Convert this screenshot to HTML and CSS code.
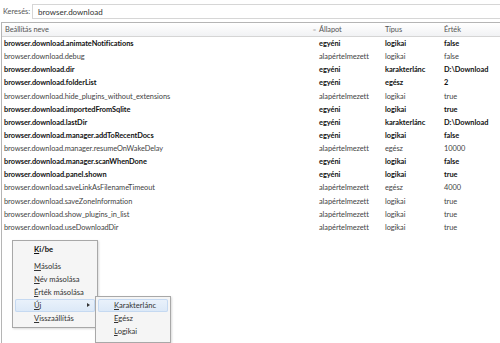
FILE: index.html
```html
<!DOCTYPE html>
<html lang="hu">
<head>
<meta charset="utf-8">
<link rel="stylesheet" href="styles.css">
</head>
<body>
<div class="search">
  <span class="search-label">Keresés:</span>
  <div class="search-input">browser.download</div>
</div>
<div class="list">
  <div class="row head">
    <div class="cell">Beállítás neve</div>
    <div class="cell sorted"><span class="sort">=</span>Állapot</div>
    <div class="cell">Típus</div>
    <div class="cell">Érték</div>
  </div>
  <div class="row b"><div class="cell">browser.download.animateNotifications</div><div class="cell">egyéni</div><div class="cell">logikai</div><div class="cell">false</div></div>
  <div class="row"><div class="cell">browser.download.debug</div><div class="cell">alapértelmezett</div><div class="cell">logikai</div><div class="cell">false</div></div>
  <div class="row b"><div class="cell">browser.download.dir</div><div class="cell">egyéni</div><div class="cell">karakterlánc</div><div class="cell">D:\Download</div></div>
  <div class="row b"><div class="cell">browser.download.folderList</div><div class="cell">egyéni</div><div class="cell">egész</div><div class="cell">2</div></div>
  <div class="row"><div class="cell">browser.download.hide_plugins_without_extensions</div><div class="cell">alapértelmezett</div><div class="cell">logikai</div><div class="cell">true</div></div>
  <div class="row b"><div class="cell">browser.download.importedFromSqlite</div><div class="cell">egyéni</div><div class="cell">logikai</div><div class="cell">true</div></div>
  <div class="row b"><div class="cell">browser.download.lastDir</div><div class="cell">egyéni</div><div class="cell">karakterlánc</div><div class="cell">D:\Download</div></div>
  <div class="row b"><div class="cell">browser.download.manager.addToRecentDocs</div><div class="cell">egyéni</div><div class="cell">logikai</div><div class="cell">false</div></div>
  <div class="row"><div class="cell">browser.download.manager.resumeOnWakeDelay</div><div class="cell">alapértelmezett</div><div class="cell">egész</div><div class="cell">10000</div></div>
  <div class="row b"><div class="cell">browser.download.manager.scanWhenDone</div><div class="cell">egyéni</div><div class="cell">logikai</div><div class="cell">false</div></div>
  <div class="row b"><div class="cell">browser.download.panel.shown</div><div class="cell">egyéni</div><div class="cell">logikai</div><div class="cell">true</div></div>
  <div class="row"><div class="cell">browser.download.saveLinkAsFilenameTimeout</div><div class="cell">alapértelmezett</div><div class="cell">egész</div><div class="cell">4000</div></div>
  <div class="row"><div class="cell">browser.download.saveZoneInformation</div><div class="cell">alapértelmezett</div><div class="cell">logikai</div><div class="cell">true</div></div>
  <div class="row"><div class="cell">browser.download.show_plugins_in_list</div><div class="cell">alapértelmezett</div><div class="cell">logikai</div><div class="cell">true</div></div>
  <div class="row"><div class="cell">browser.download.useDownloadDir</div><div class="cell">alapértelmezett</div><div class="cell">logikai</div><div class="cell">true</div></div>
</div>

<div class="menu main-menu">
  <div class="item bold"><u>K</u>i/be</div>
  <div class="sep"></div>
  <div class="item"><u>M</u>ásolás</div>
  <div class="item"><u>N</u>év másolása</div>
  <div class="item"><u>É</u>rték másolása</div>
  <div class="item active"><u>Ú</u>j<span class="arrow"></span></div>
  <div class="item"><u>V</u>isszaállítás</div>
</div>
<div class="menu sub-menu">
  <div class="item active"><u>K</u>arakterlánc</div>
  <div class="item"><u>E</u>gész</div>
  <div class="item"><u>L</u>ogikai</div>
</div>
</body>
</html>
```
FILE: styles.css
```css
html, body {
  margin: 0;
  padding: 0;
  background: #fff;
}
body {
  font-family: Lato, "Noto Sans", sans-serif;
  font-size: 7.4px;
  color: #444;
  width: 500px;
  height: 343px;
  overflow: hidden;
  position: relative;
}
.search {
  display: flex;
  align-items: center;
  height: 20px;
  padding: 2px 0 0 3px;
  box-sizing: border-box;
}
.search-label {
  width: 29px;
  color: #555;
}
.search-input {
  flex: 1;
  height: 15px;
  line-height: 14px;
  border: 1px solid #d6d6d6;
  border-right: none;
  padding-left: 5px;
  color: #333;
  font-size: 8px;
  box-sizing: border-box;
}
.list {
  margin: 2px 0 0 1px;
  border-left: 1px solid #b5b5b5;
  border-top: 1px solid #b5b5b5;
  height: 330px;
}
.row {
  display: grid;
  grid-template-columns: 309px 70px 59px 1fr;
  height: 13.14px;
  line-height: 13.14px;
  white-space: nowrap;
  letter-spacing: -0.05px;
}
.row .cell {
  padding-left: 4px;
  overflow: hidden;
}
.row .cell:first-child {
  padding-left: 2px;
}
.row .cell:nth-child(2) {
  padding-left: 8px;
}
.row.head {
  height: 13px;
  line-height: 13px;
  background: linear-gradient(#fff, #f1f2f4);
  border-bottom: 1px solid #d5d5d5;
  color: #555;
}
.row.head .cell:first-child {
  padding-left: 3px;
}
.row.head .cell.sorted {
  padding-left: 0;
}
.sort {
  display: inline-block;
  width: 7px;
  color: #b0b0b0;
  font-size: 6px;
  text-align: center;
  margin-right: 1px;
}
.row.b {
  font-weight: bold;
  color: #111;
}
.menu {
  position: absolute;
  background: #f5f5f5;
  border: 1px solid #a8a8a8;
  box-shadow: 1px 1px 2px rgba(0,0,0,0.15);
  padding: 2px;
  box-sizing: border-box;
  color: #333;
  font-size: 7.6px;
}
.main-menu {
  left: 12px;
  top: 240px;
  width: 86px;
  height: 88px;
}
.sub-menu {
  left: 95px;
  top: 296px;
  width: 76px;
  height: 47px;
}
.item {
  position: relative;
  height: 13px;
  line-height: 13px;
  padding-left: 19px;
  white-space: nowrap;
}
.item.bold {
  font-weight: bold;
  color: #111;
}
.sep {
  height: 4px;
}
.active {
  background: linear-gradient(#eaf2fb, #dbe8f7);
  box-shadow: inset 0 0 0 1px #c5d9f1;
  border-radius: 2px;
}
.sub-menu .item {
  padding-left: 16px;
}
.arrow {
  position: absolute;
  right: 5px;
  top: 4px;
  width: 0;
  height: 0;
  border-left: 3px solid #333;
  border-top: 2.5px solid transparent;
  border-bottom: 2.5px solid transparent;
}
```
